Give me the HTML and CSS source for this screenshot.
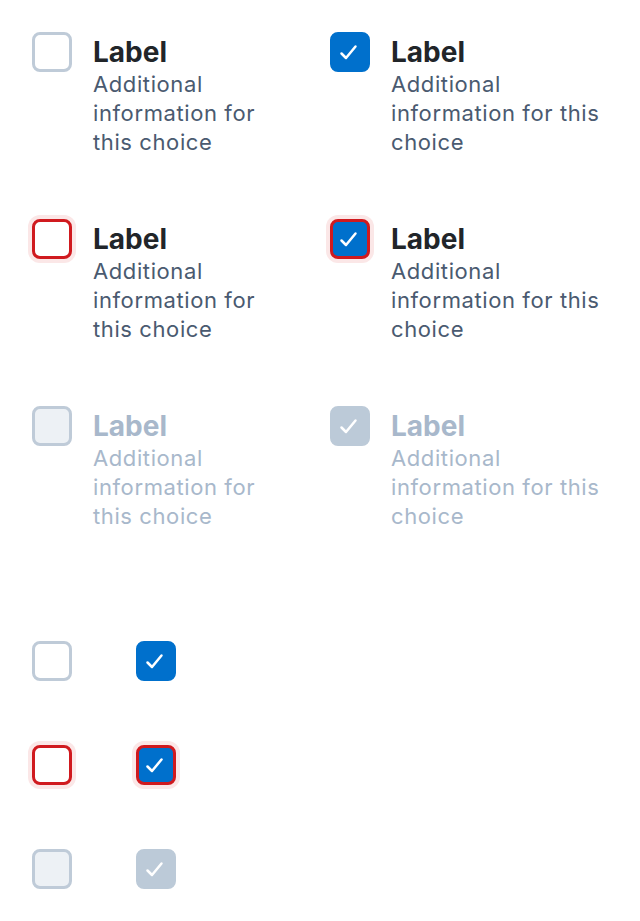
FILE: index.html
```html
<!DOCTYPE html>
<html>
<head>
<meta charset="utf-8">
<link rel="stylesheet" href="styles.css">
</head>
<body>
<div class="page">
  <div class="grid">
    <div class="choice">
      <span class="box"></span>
      <div class="text"><div class="title">Label</div><div class="desc">Additional information for this choice</div></div>
    </div>
    <div class="choice">
      <span class="box checked"><svg viewBox="0 0 40 40" width="40" height="40"><polyline points="11.5,21.5 16,26 25.5,14.5" /></svg></span>
      <div class="text"><div class="title">Label</div><div class="desc">Additional information for this choice</div></div>
    </div>
    <div class="choice">
      <span class="box error"></span>
      <div class="text"><div class="title">Label</div><div class="desc">Additional information for this choice</div></div>
    </div>
    <div class="choice">
      <span class="box checked error"><svg viewBox="0 0 40 40" width="40" height="40"><polyline points="11.5,21.5 16,26 25.5,14.5" /></svg></span>
      <div class="text"><div class="title">Label</div><div class="desc">Additional information for this choice</div></div>
    </div>
    <div class="choice disabled">
      <span class="box"></span>
      <div class="text"><div class="title">Label</div><div class="desc">Additional information for this choice</div></div>
    </div>
    <div class="choice disabled">
      <span class="box checked"><svg viewBox="0 0 40 40" width="40" height="40"><polyline points="11.5,21.5 16,26 25.5,14.5" /></svg></span>
      <div class="text"><div class="title">Label</div><div class="desc">Additional information for this choice</div></div>
    </div>
  </div>
  <div class="mini">
    <span class="box"></span>
    <span class="box checked"><svg viewBox="0 0 40 40" width="40" height="40"><polyline points="11.5,21.5 16,26 25.5,14.5" /></svg></span>
    <span class="box error"></span>
    <span class="box checked error"><svg viewBox="0 0 40 40" width="40" height="40"><polyline points="11.5,21.5 16,26 25.5,14.5" /></svg></span>
    <span class="box dis"></span>
    <span class="box checked dis"><svg viewBox="0 0 40 40" width="40" height="40"><polyline points="11.5,21.5 16,26 25.5,14.5" /></svg></span>
  </div>
</div>
</body>
</html>
```

FILE: styles.css
```css
html, body {
  margin: 0;
  background: #ffffff;
}
.page {
  padding: 32px;
  font-family: Inter, "Noto Sans", sans-serif;
}
.grid {
  display: grid;
  grid-template-columns: 256px 1fr;
  column-gap: 42px;
  row-gap: 62px;
}
.choice {
  display: flex;
  align-items: flex-start;
  gap: 21px;
}
.text {
  padding-top: 2px;
}
.box {
  flex: none;
  width: 40px;
  height: 40px;
  box-sizing: border-box;
  border: 3px solid #bfcbd8;
  border-radius: 8px;
  background: #ffffff;
  display: flex;
  align-items: center;
  justify-content: center;
}
.box svg {
  flex: none;
  margin: -3px;
}
.box polyline {
  fill: none;
  stroke: #ffffff;
  stroke-width: 2.5;
  stroke-linecap: round;
  stroke-linejoin: round;
}
.box.checked {
  background: #0070cc;
  border-color: #0070cc;
}
.box.error {
  border-color: #d01a1f;
  box-shadow: 0 0 0 4px #fbe7e7;
}
.disabled .box, .box.dis {
  background: #edf1f5;
  border-color: #bfcbd8;
}
.disabled .box.checked, .box.checked.dis {
  background: #bccad8;
  border-color: #bccad8;
}
.title {
  font-size: 28px;
  line-height: 36px;
  font-weight: 700;
  color: #212529;
}
.desc {
  font-size: 22px;
  line-height: 29px;
  letter-spacing: 0.6px;
  color: #4a5a70;
}
.disabled .title, .disabled .desc {
  color: #a8b8cb;
}
.mini {
  margin-top: 110px;
  display: grid;
  grid-template-columns: 40px 40px;
  column-gap: 64px;
  row-gap: 64px;
}
```
